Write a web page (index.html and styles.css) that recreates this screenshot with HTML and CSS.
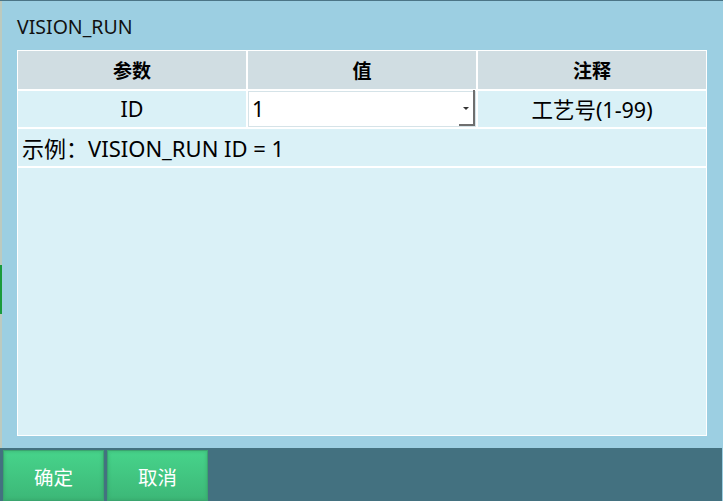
FILE: index.html
```html
<!DOCTYPE html>
<html lang="zh-CN">
<head>
<meta charset="utf-8">
<title>VISION_RUN</title>
<link rel="stylesheet" href="styles.css">
</head>
<body>
<div class="frame">
  <div class="topline"></div>
  <div class="main">
    <div class="edge"><span class="edge-mark"></span></div>
    <div class="panel">
      <div class="title">VISION_RUN</div>
      <div class="table">
        <div class="th">参数</div>
        <div class="th">值</div>
        <div class="th">注释</div>
        <div class="td">ID</div>
        <div class="td select-cell">
          <span class="select-value">1</span>
          <span class="select-shadow"></span>
          <span class="arrow"></span>
        </div>
        <div class="td">工艺号(1-99)</div>
        <div class="td example">示例：VISION_RUN ID = 1</div>
        <div class="fill"></div>
      </div>
    </div>
  </div>
  <div class="footer">
    <button class="btn">确定</button>
    <button class="btn">取消</button>
  </div>
</div>
</body>
</html>
```

FILE: styles.css
```css
* { box-sizing: border-box; }
html, body {
  margin: 0;
  padding: 0;
  width: 723px;
  height: 501px;
  overflow: hidden;
  background: #9ccfe2;
  font-family: "Noto Sans", "Noto Sans CJK SC", sans-serif;
  color: #000;
}
.frame {
  display: flex;
  flex-direction: column;
  width: 723px;
  height: 501px;
}
.topline {
  height: 1px;
  background: #4b7586;
}
.main {
  display: flex;
  height: 447px;
}
.edge {
  width: 2px;
  background: #bccabf;
  position: relative;
}
.edge-mark {
  position: absolute;
  left: 0;
  top: 264px;
  width: 2px;
  height: 49px;
  background: #1a9b3c;
}
.panel {
  flex: 1;
  padding-left: 15px;
}
.title {
  margin-top: 12px;
  margin-bottom: 9px;
  height: 28px;
  line-height: 28px;
  font-size: 19.5px;
  color: #111;
}
.table {
  width: 690px;
  height: 386px;
  background: #ffffff;
  padding: 1px;
  display: grid;
  grid-template-columns: 228px 228px 228px;
  grid-template-rows: 38px 36px 37px 1fr;
  gap: 2px;
}
.th {
  background: #d0dde2;
  font-weight: bold;
  font-size: 19px;
  display: flex;
  align-items: center;
  justify-content: center;
}
.td {
  background: #daf1f7;
  font-size: 21.5px;
  display: flex;
  align-items: center;
  justify-content: center;
  padding-bottom: 2px;
}
.select-cell {
  background: #ffffff;
  border: 1px solid #d5e3e8;
  justify-content: flex-start;
  padding-left: 3px;
  position: relative;
}
.select-shadow {
  position: absolute;
  right: 0;
  bottom: 0;
  width: 16px;
  height: 36px;
  border-right: 2px solid #6f6f6f;
  border-bottom: 2px solid #6f6f6f;
}
.arrow {
  position: absolute;
  right: 6px;
  top: 15px;
  width: 0;
  height: 0;
  border-left: 3px solid transparent;
  border-right: 3px solid transparent;
  border-top: 3px solid #333;
}
.example {
  grid-column: 1 / 4;
  justify-content: flex-start;
  padding-left: 4px;
  font-size: 22px;
}
.fill {
  grid-column: 1 / 4;
  background: #daf1f7;
}
.footer {
  height: 53px;
  width: 722px;
  background: #437180;
  display: flex;
  gap: 3px;
  padding: 2px 0 0 3px;
}
.btn {
  width: 101px;
  height: 51px;
  border: none;
  margin: 0;
  padding: 2px 0 0 0;
  background: linear-gradient(#47d48b, #3cb777);
  box-shadow: inset 0 0 0 1px #3aa56f, inset 0 0 3px 2px rgba(50,150,95,0.35);
  color: #ffffff;
  font-family: "Noto Sans CJK SC", sans-serif;
  font-size: 19.5px;
  line-height: 1;
}
```
